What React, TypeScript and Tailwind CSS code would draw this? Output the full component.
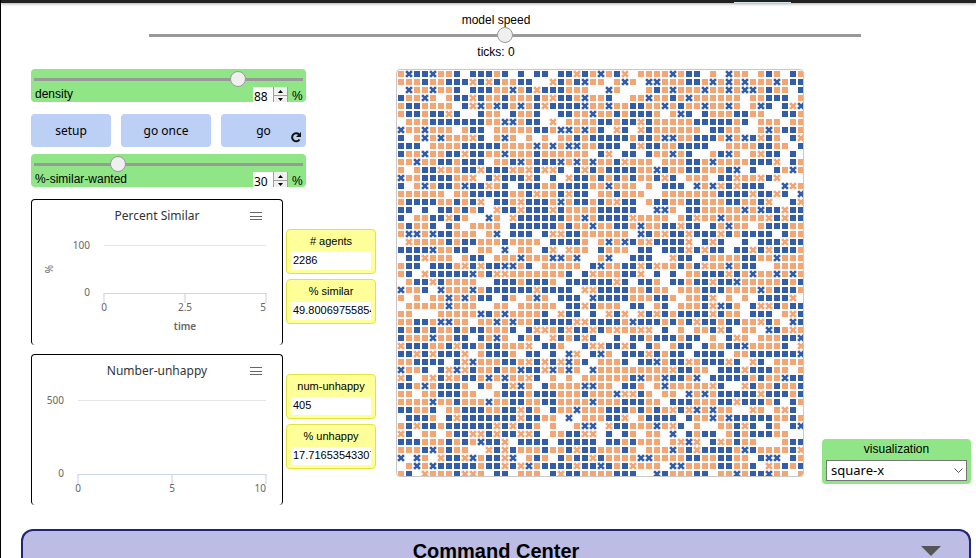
import React, { useState } from "react";

// One string per patch row: b/o are squares, B/O crosses, "." an empty patch.
// Spaces only split a row into readable blocks.
const PATCHES = [
  "oBbbBoob.bbbob.b. bb.bbOboBobO.oooo Bobb.o.Boo.obo.bo",
  "oooboobbbObOboobb ..ObobBoo.oBo.BBo oobboBoBoBoooBobb",
  ".BooBoob.bbbooBob Obbbooo..Bo...obo BoooBooBoBBoboo.b",
  "booBo.obbOboobooo boObboBoob..ooBoo boBoooooo.oobbb.o",
  "obboooo.bOBoBboBo bObbbbBooBoobbooB obooBooBo.oBb.bOB",
  "obbobbOb..boo.boo b..bbooBoobobbbo. oBb.booobboo..bbo",
  ".ooobbbbbbbooBBob b.O.oooobbobbOboo ooobbbbbob.ooo.oo",
  "BooBooo.obb.ooooo bboBBoBob.Ob.Oboo oooo.bboo..oBobbo",
  "b.oBoBoooOb.oBo.o .o.oobobbbbbobboB BoobbboBoBbObo.bO",
  "bbb.oooobbbbboooo BoBoBBoobbb.bObbo obbbb..oooobboo.b",
  "booBoobbObbooBooo boooooo.bO.bb.boo Bob..obBo.oObb.b.",
  "ooBoobbobbb.oobBo bbbBoBoBoobOooo.o oobboBoooobbbO.bo",
  "o.obbOoobbObbbOoO bOOb.bObobbbbooBb oobbooobB.b..boBo",
  "BoobbbbooO.bObbbO b.b.ObboboboboobO b.ooo.bbOooObO...",
  "b.oBobboBbbOob.bb boobbbbooBooo.o.b bb.BoBObObbb..BOo",
  "oooooo.oobbbbboob OoobObb.oobooo..o oooooobbbbObbOb.B",
  "obbbboobobO.bboOb bboBobboboObb.obb oobbooobboobO..bO",
  "bb.b.bbobob.ObbOb bbOboooobbbbb..BB o.bboooooBoBbbObb",
  "b.oobbObo..Bo.Obb bbbbooBobbbbOoooo .obOooBoooooObObb",
  "oboob.bo.oooo.bbb bbbobooBoobboBoob bObb.boBoo.obbboo",
  "oBBoBbbooo.oB.bbb .bOObboooooo.BboO bbObbbObobbbb.boo",
  ".Ooooobobbooobooo o.bbbbo.oBoBboObb bbO.bOb..b.bbbObb",
  "bbbbBoobb.oo.B.oo .bO.Ooo.booo.bb.b bbObObb.bbObObbbo",
  ".bbOooo.obb.oooBo ooBBoB..oB..bbb.. Obb.boooobbooBooo",
  "obb.bbboObObbBBob .ooooo.bBoobbObOo obobOooBobb..oooo",
  "ob.ObbbbbBobOOooo oooob.bOooobbO.b. b.oobbbOboBooBoBo",
  ".obbOboooo..bbbob bbo.bbbbbbOb.bbo. bbobbObbBooooobob",
  "Boob.BoooBobbbbbb Obbbb.OObbbbooboo .ooobbbooooBobbbo",
  "o.o.ooBoBobb.bo.o Bo.bbb.Bbbbbooobb o.oobO.o.o.bbbbO.",
  ".oooooBooo..oo.oo ooo.bbObooo.bb.ob .ooobOBbo.bOObobb",
  "oo...oooooBboBooo ob.Obb.b.ObO.ObOb obbbbOboo.bbb.oOb",
  "oobboBBoo.ooBoBoo bbbbbOObbbboBbbbo bobObbobbooObo.Bb",
  "boboboobobbooob.b OOobObbOboOooOO.b .o.oobOb.oo.BboOo",
  "boooBoobb.boBo.bo b.ObobOb..b.bbobb bobb.o.bOo.ooobbB",
  "ObbboobObbobboooO.bbo..bO ObbOb.bo.obb.boobbBoooob.O",
  "bbObObbbO.obbbo.bb.b.BO.b Bo.bbbObobb.bbbb.oobbbbbbB",
  "oobbbb.bOBooobboObObOBob. ooob.bbBobbOobbbOb.Ob.oooo",
  "Boob.bOBObooboo BbbOBoBo.B oooooooooObboo.bbbObbboo.o",
  "Ob.oObOobboBoBooOb.o.o.oo oooobBooBbboB.bbbbbobooBbb",
  "bboBobbbo.bo.bOBo.booooBB oo.bbo.oBoooooOb..Obooboob.",
  "oo.oobbboo..obbbobbbooobo ooBOObo.oo.BoBobbbbbObbbob",
  "ooooBooboooBoobboobbooooB ooobbboo.bbbooobbObbbob.bo",
  "bboob.oobbboobbObo.booBoo obbboboboObOBoBoo..Oo.oOb.",
  ".bbbo.bObbbbbbbObboo.B.oo obbO.obbbb.booBoBbbbbboobo",
  "obObbobbbbbbObObbo.o..oBB .ObboooBoOb.o..oobOb.bo.bB",
  "Ob.oo.obbOObObbOOb.oobbOO .b.bo.oo.B.bobb.obobbboo..",
  "bbbooobob oBbbO. bbbb.bbbbb .bbobooo.oOBO.bOoboo...obb",
  "ooobBoboo ..ObOb ooobo obObb ooobo.oooBobObbbboBboooobO",
  "B.Bo.ObbOBobbOB.obo.bobbO booooBBoooobboobboo.bBB.bo",
  ".oBoBbbbbbobbObOBobbbbObb BbobOooo.BBoooobboob.Oobob",
  "ob.OooobOOo.bb.ooo.bObboo oobbb..Bbooobb.ooBobbBoo.o",
].map((row) => row.replaceAll(" ", "").slice(0, 51).split(""));

const ORANGE = "#f4a574";
const BLUE = "#345da9";

function View() {
  return (
    <div className="h-[408px] w-[408px] shrink-0 overflow-hidden rounded border border-[#c8c8c8] bg-[#fdfdfd]">
      <svg width="406" height="406" role="img" aria-label="Segregation world">
        {PATCHES.map((row, r) =>
          row.map((patch, c) => {
            if (patch === ".") return null;
            const fill = patch.toLowerCase() === "b" ? BLUE : ORANGE;
            const x = c * 8;
            const y = r * 8;
            return patch === "b" || patch === "o" ? (
              <rect key={`${r}-${c}`} x={x + 1} y={y + 1} width="6" height="6" fill={fill} />
            ) : (
              <path key={`${r}-${c}`} d={`M${x + 1.1} ${y + 1.1}l5.8 5.8m0-5.8l-5.8 5.8`} stroke={fill} strokeWidth="2.7" />
            );
          })
        )}
      </svg>
    </div>
  );
}

const range =
  "block h-4 w-full cursor-pointer appearance-none bg-transparent [&::-webkit-slider-runnable-track]:h-[3px] [&::-webkit-slider-runnable-track]:bg-[#999] [&::-webkit-slider-thumb]:-mt-[7px] [&::-webkit-slider-thumb]:h-4 [&::-webkit-slider-thumb]:w-4 [&::-webkit-slider-thumb]:appearance-none [&::-webkit-slider-thumb]:rounded-full [&::-webkit-slider-thumb]:border [&::-webkit-slider-thumb]:border-[#999] [&::-webkit-slider-thumb]:bg-[#efefef]";

function Slider({ id, label, min, max, initial }: { id: string; label: string; min: number; max: number; initial: number }) {
  const [value, setValue] = useState(initial);
  const step = (d: number) => setValue((v) => Math.max(min, Math.min(max, v + d)));
  return (
    <div className="rounded bg-[#90e687] px-[3px] pt-[2px]">
      <input id={id} type="range" min={min} max={max} value={value} onChange={(e) => setValue(+e.target.value)} className={range} />
      <div className="flex h-[15px] items-end">
        <label htmlFor={id} className="grow pl-px leading-[15px]">{label}</label>
        <input
          type="number"
          aria-label={`${label} value`}
          value={value}
          onChange={(e) => setValue(+e.target.value)}
          className="h-[15px] w-5 appearance-none bg-white pt-[3px] pl-px font-['Noto_Sans',sans-serif] leading-3 [&::-webkit-inner-spin-button]:appearance-none"
        />
        <div className="flex h-[15px] w-[15px] flex-col gap-px border-x border-[#a0a0a0] bg-[#a0a0a0]">
          <button aria-label={`Increase ${label}`} onClick={() => step(1)} className="flex h-2 items-center justify-center bg-[#f0f0f0]">
            <svg width="5" height="3"><path d="M0 3L2.5 0L5 3z" /></svg>
          </button>
          <button aria-label={`Decrease ${label}`} onClick={() => step(-1)} className="flex h-[6px] items-center justify-center bg-[#f0f0f0]">
            <svg width="5" height="3"><path d="M0 0H5L2.5 3z" /></svg>
          </button>
        </div>
        <span className="w-[15px] pl-1 leading-3">%</span>
      </div>
    </div>
  );
}

type ChartProps = { title: string; height: number; left: number; base: number; top: string; ticks: string[]; xTitle?: string; yTitle?: string };

function Chart({ title, height, left, base, top, ticks, xTitle, yTitle }: ChartProps) {
  const right = 234;
  const mid = (left + right) / 2;
  return (
    <section className="relative w-[252px] shrink-0 rounded border border-b-0 border-black bg-white font-['Noto_Sans',sans-serif]">
      <h2 className="h-8 text-center text-[12px] leading-8 text-[#333]">{title}</h2>
      <button aria-label="Chart menu" className="absolute top-3 right-5 flex h-2 w-3 flex-col justify-between">
        <span className="h-px w-full bg-[#666]" />
        <span className="h-px w-full bg-[#666]" />
        <span className="h-px w-full bg-[#666]" />
      </button>
      <svg width="250" height={height} className="block text-[10px]" fill="#666">
        <path d={`M${left} 13.5H${right}`} stroke="#e6e6e6" />
        <path d={`M${left} ${base}v10M${mid} ${base}v10M${right} ${base}v10`} stroke="#e2e7f4" strokeWidth="2" />
        <path d={`M${left} ${base + 0.5}H${right}`} stroke="#ccd6eb" />
        <text x={left - 14} y="17" textAnchor="end">{top}</text>
        <text x={left - 14} y={base + 3} textAnchor="end">0</text>
        <text x={left} y={base + 18} textAnchor="middle">{ticks[0]}</text>
        <text x={mid} y={base + 18} textAnchor="middle">{ticks[1]}</text>
        <text x={right} y={base + 18} textAnchor="end">{ticks[2]}</text>
        {xTitle && <text x={mid} y={base + 37} textAnchor="middle" className="font-semibold">{xTitle}</text>}
        {yTitle && <text transform="translate(21 37) rotate(-90)" textAnchor="middle">{yTitle}</text>}
      </svg>
    </section>
  );
}

function Monitor({ label, value }: { label: string; value: string }) {
  return (
    <div className="h-[45px] w-[90px] rounded border border-[#e3e33f] bg-[#ffff99] px-1 pt-[3px] text-[11px]">
      <div className="h-[19px] text-center leading-4">{label}</div>
      <output className="block h-[18px] overflow-hidden bg-white pl-[2px] leading-4 whitespace-nowrap">{value}</output>
    </div>
  );
}

const button = "h-[33px] rounded bg-[#bccff5] font-['Noto_Sans',sans-serif] text-[12px]";

export default function App() {
  return (
    <div className="flex h-screen flex-col overflow-hidden border-l border-black bg-white font-['Liberation_Sans',Arial,sans-serif] text-[12px] text-black">
      <div className="flex h-[3px] shrink-0 justify-end bg-[#222] shadow-[0_1px_3px_rgba(0,0,0,0.35)]">
        <div className="mt-[2px] mr-[185px] h-px w-[57px] bg-[#cde5ea]" />
      </div>
      <main className="flex grow flex-col pr-[5px] pl-5">
        <div className="flex flex-col items-center pt-2">
          <label htmlFor="speed" className="h-4 leading-[18px]">model speed</label>
          <div className="ml-[18px] w-3/4">
            <input id="speed" type="range" min="-10" max="10" defaultValue="0" className={range} />
          </div>
          <div className="h-4 leading-[18px]">ticks: 0</div>
        </div>
        <div className="mt-[10px] flex items-start pl-[10px]">
          <div className="mr-5 w-[345px] shrink-0">
            <div className="w-[275px]">
              <Slider id="density" label="density" min={50} max={99} initial={88} />
              <div className="mt-3 mb-[7px] flex gap-[10px]">
                <button className={`${button} w-20`}>setup</button>
                <button className={`${button} w-[90px]`}>go once</button>
                <button className={`${button} relative w-[85px]`}>
                  go
                  <svg className="absolute right-1 bottom-1" width="12" height="12" fill="none" stroke="#111" strokeWidth="2">
                    <path d="M9.5 8.500A4 4 0 1 1 9 3.500" />
                    <path d="M11 1v5H6z" fill="#111" stroke="none" />
                  </svg>
                </button>
              </div>
              <Slider id="similar" label="%-similar-wanted" min={0} max={100} initial={30} />
            </div>
            <div className="mt-3 flex gap-[3px]">
              <Chart title="Percent Similar" height={113} left={72} base={61} top="100" ticks={["0", "2.5", "5"]} xTitle="time" yTitle="%" />
              <div className="flex flex-col gap-[5px] pt-[30px]">
                <Monitor label="# agents" value="2286" />
                <Monitor label="% similar" value="49.80069755854509" />
              </div>
            </div>
            <div className="mt-[9px] flex gap-[3px]">
              <Chart title="Number-unhappy" height={118} left={46} base={87} top="500" ticks={["0", "5", "10"]} />
              <div className="flex flex-col gap-[5px] pt-5">
                <Monitor label="num-unhappy" value="405" />
                <Monitor label="% unhappy" value="17.716535433070867" />
              </div>
            </div>
          </div>
          <View />
          <div className="mt-[370px] ml-auto h-[45px] w-[149px] shrink-0 rounded bg-[#90e687] px-1">
            <label htmlFor="visualization" className="block h-[21px] text-center leading-[21px]">visualization</label>
            <div className="relative">
              <select id="visualization" className="block h-[21px] w-full appearance-none border border-[#767676] bg-white pl-1 font-['Noto_Sans',sans-serif] text-[13px] leading-[19px]">
                <option>square-x</option>
              </select>
              <svg className="pointer-events-none absolute top-2 right-1" width="9" height="6" fill="none" stroke="#555">
                <path d="M.5 .5l4 4 4-4" />
              </svg>
            </div>
          </div>
        </div>
        <button className="mt-6 flex h-[42px] shrink-0 items-center rounded-t-xl border-2 border-b-0 border-[#20247a] bg-[#bcbce5] px-7 text-[20px] font-bold">
          <span className="grow pl-5">Command Center</span>
          <svg width="20" height="10"><path d="M0 0H20L10 10z" fill="#555" /></svg>
        </button>
      </main>
    </div>
  );
}
